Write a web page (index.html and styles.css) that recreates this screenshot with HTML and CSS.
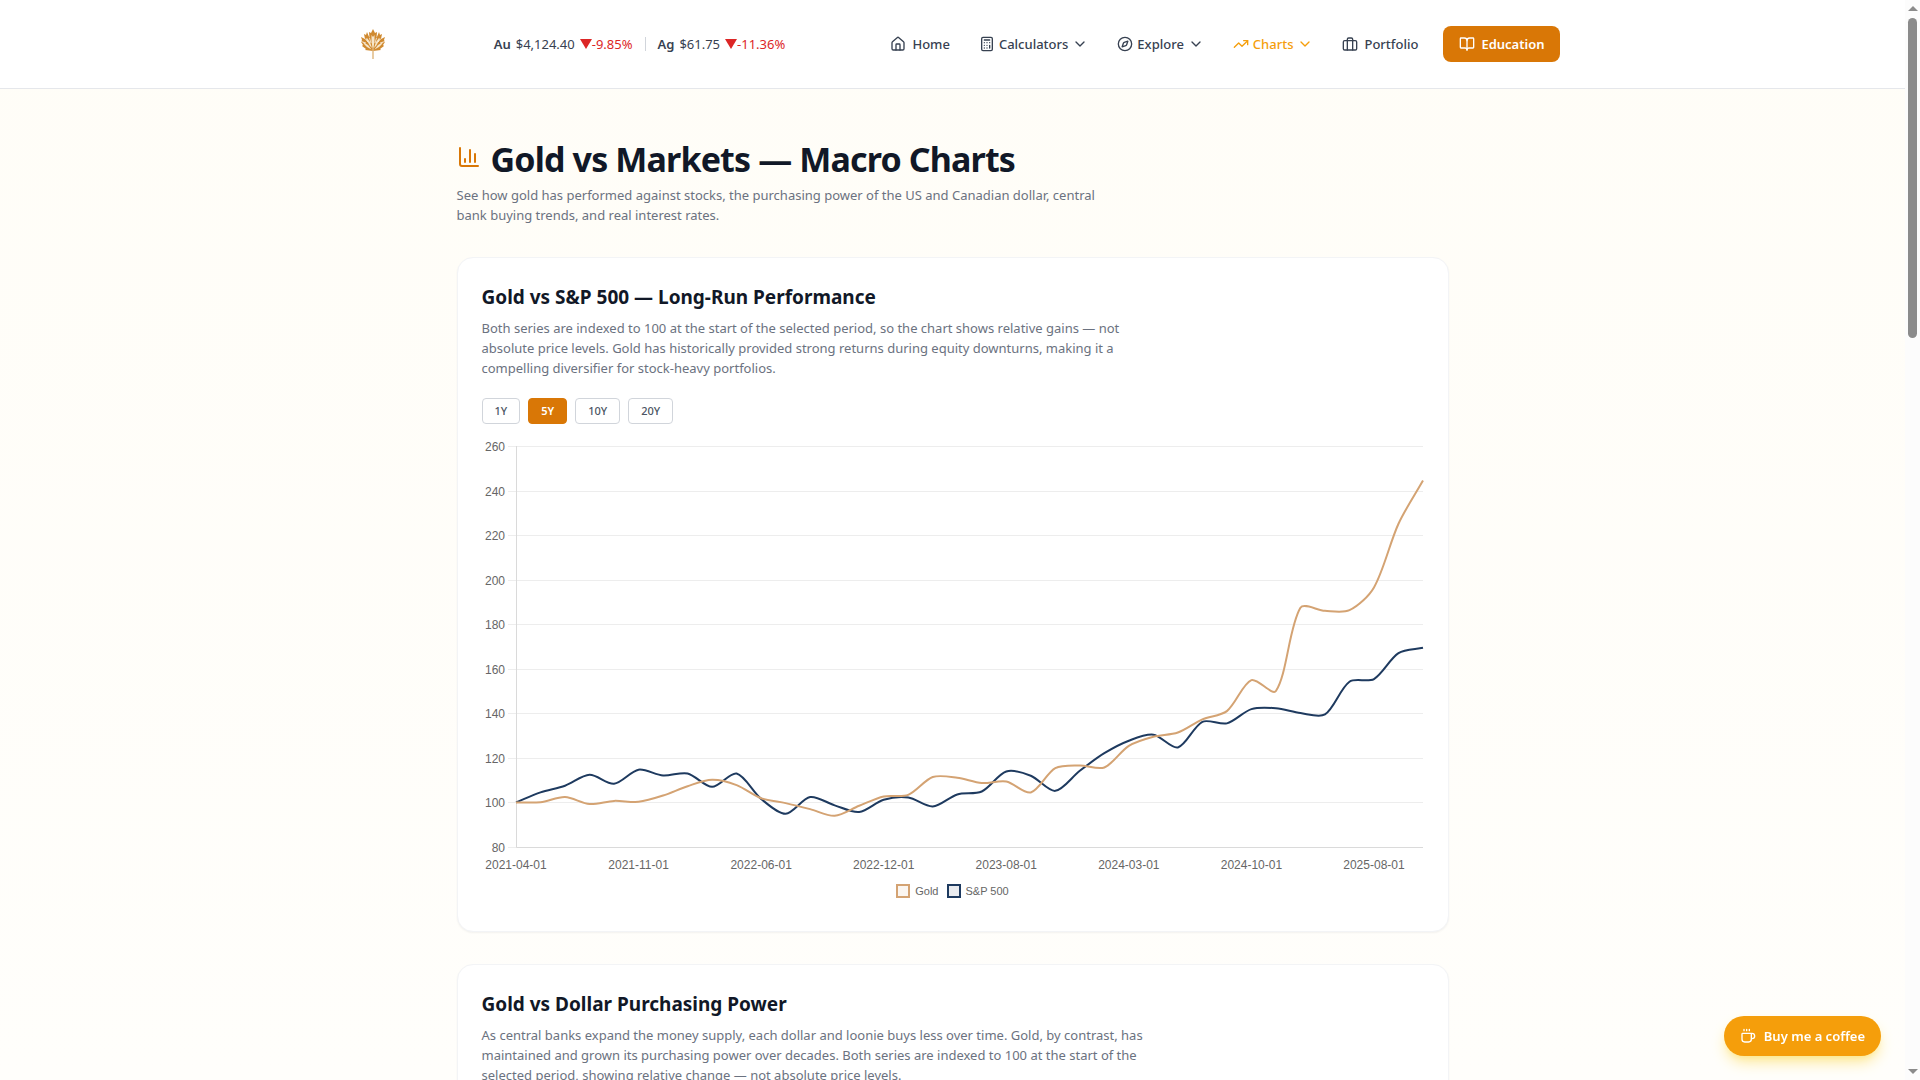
FILE: index.html
```html
<!DOCTYPE html>
<html lang="en">
<head>
    <meta charset="UTF-8">
    <meta name="viewport" content="width=device-width, initial-scale=1.0">
    <title>Gold vs Markets — Macro Charts</title>
    <link rel="stylesheet" href="styles.css">
</head>
<body>
    <header class="site-header">
        <div class="header-inner">
            <a href="#" class="logo" aria-label="Home page">
                <svg viewBox="0 0 24 30" width="24" height="30">
                    <g id="half-leaf">
                        <path fill="#d08a30" d="M12 0L14 4L16 3L15.500 9L18 3L19 6L21 5L20 10L24 8L23 11L24 13L22 16L23 17L19 20L20 21L12 22Z"/>
                        <path fill="#f6e6ca" d="M12 8L13.500 6L13.500 12L12.500 19L12 19ZM18 9L19 10L15 17L13 19L15 13ZM22 13L21 15L18 18L13.500 20.500L17 16Z"/>
                        <path fill="none" stroke="#fff" stroke-width=".7" d="M15.500 9L14 14M24 12.500L19 14M20 9.500L17 13"/>
                    </g>
                    <use href="#half-leaf" transform="matrix(-1 0 0 1 24 0)"/>
                    <path fill="none" stroke="#dfb67c" stroke-width="1.400" d="M12 18v12"/>
                </svg>
            </a>

            <div class="ticker">
                <div class="quote">
                    <strong>Au</strong>
                    <span>$4,124.40</span>
                    <span class="down"><i class="arrow"></i>-9.85%</span>
                </div>
                <span class="divider"></span>
                <div class="quote">
                    <strong>Ag</strong>
                    <span>$61.75</span>
                    <span class="down"><i class="arrow"></i>-11.36%</span>
                </div>
            </div>

            <nav class="nav">
                <a href="#" class="nav-link wide">
                    <svg class="icon" viewBox="0 0 24 24"><path d="M15 21v-8a1 1 0 0 0-1-1h-4a1 1 0 0 0-1 1v8"/><path d="M3 10a2 2 0 0 1 .709-1.528l7-5.999a2 2 0 0 1 2.582 0l7 5.999A2 2 0 0 1 21 10v9a2 2 0 0 1-2 2H5a2 2 0 0 1-2-2z"/></svg>
                    Home
                </a>
                <button type="button" class="nav-link">
                    <svg class="icon" viewBox="0 0 24 24"><rect width="16" height="20" x="4" y="2" rx="2"/><path d="M8 6h8M16 14v4M16 10h.01M12 10h.01M8 10h.01M12 14h.01M8 14h.01M12 18h.01M8 18h.01"/></svg>
                    Calculators
                    <svg class="icon" viewBox="0 0 24 24"><path d="m6 9 6 6 6-6"/></svg>
                </button>
                <button type="button" class="nav-link">
                    <svg class="icon" viewBox="0 0 24 24"><path d="m16.240 7.760-1.804 5.411a2 2 0 0 1-1.265 1.265L7.760 16.240l1.804-5.411a2 2 0 0 1 1.265-1.265z"/><circle cx="12" cy="12" r="10"/></svg>
                    Explore
                    <svg class="icon" viewBox="0 0 24 24"><path d="m6 9 6 6 6-6"/></svg>
                </button>
                <button type="button" class="nav-link active">
                    <svg class="icon" viewBox="0 0 24 24"><path d="M16 7h6v6"/><path d="m22 7-8.500 8.500-5-5L2 17"/></svg>
                    Charts
                    <svg class="icon" viewBox="0 0 24 24"><path d="m6 9 6 6 6-6"/></svg>
                </button>
                <a href="#" class="nav-link wide">
                    <svg class="icon" viewBox="0 0 24 24"><rect width="20" height="14" x="2" y="7" rx="2"/><path d="M16 21V5a2 2 0 0 0-2-2h-4a2 2 0 0 0-2 2v16"/></svg>
                    Portfolio
                </a>
                <a href="#" class="nav-link nav-cta">
                    <svg class="icon" viewBox="0 0 24 24"><path d="M12 7v14"/><path d="M3 18a1 1 0 0 1-1-1V4a1 1 0 0 1 1-1h5a4 4 0 0 1 4 4 4 4 0 0 1 4-4h5a1 1 0 0 1 1 1v13a1 1 0 0 1-1 1h-6a3 3 0 0 0-3 3 3 3 0 0 0-3-3z"/></svg>
                    Education
                </a>
            </nav>
        </div>
    </header>

    <main class="page">
        <div class="page-head">
            <h1>
                <svg class="icon" viewBox="0 0 24 24"><path d="M3 3v16a2 2 0 0 0 2 2h16"/><path d="M18 17V9M13 17V5M8 17v-3"/></svg>
                Gold vs Markets — Macro Charts
            </h1>
            <p>See how gold has performed against stocks, the purchasing power of the US and Canadian dollar, central bank buying trends, and real interest rates.</p>
        </div>

        <section class="card">
            <h2>Gold vs S&amp;P 500 — Long-Run Performance</h2>
            <p>Both series are indexed to 100 at the start of the selected period, so the chart shows relative gains — not absolute price levels. Gold has historically provided strong returns during equity downturns, making it a compelling diversifier for stock-heavy portfolios.</p>
            <div class="ranges">
                <button type="button">1Y</button>
                <button type="button" class="selected">5Y</button>
                <button type="button">10Y</button>
                <button type="button">20Y</button>
            </div>
            <svg class="chart" id="chart" role="img" aria-label="Gold and S&amp;P 500, indexed to 100"></svg>
            <div class="legend">
                <span class="key gold">Gold</span>
                <span class="key stocks">S&amp;P 500</span>
            </div>
        </section>

        <section class="card">
            <h2>Gold vs Dollar Purchasing Power</h2>
            <p>As central banks expand the money supply, each dollar and loonie buys less over time. Gold, by contrast, has maintained and grown its purchasing power over decades. Both series are indexed to 100 at the start of the selected period, showing relative change — not absolute price levels.</p>
        </section>
    </main>

    <a href="#" class="coffee">
        <svg class="icon" viewBox="0 0 24 24"><path d="M10 2v2M14 2v2M6 2v2"/><path d="M16 8a1 1 0 0 1 1 1v8a4 4 0 0 1-4 4H7a4 4 0 0 1-4-4V9a1 1 0 0 1 1-1h14a4 4 0 1 1 0 8h-1"/></svg>
        Buy me a coffee
    </a>

    <div class="scrollbar" aria-hidden="true">
        <i class="scroll-up"></i>
        <i class="scroll-thumb"></i>
        <i class="scroll-down"></i>
    </div>

    <script src="chart.js"></script>
</body>
</html>
```

FILE: styles.css
```css
*, *::before {
    box-sizing: border-box;
}

body {
    margin: 0;
    padding-right: 15px;
    height: 100vh;
    overflow: hidden;
    background: linear-gradient(#fffdf7, #fffefb);
    color: #111827;
    font-family: "Segoe UI", "Noto Sans", sans-serif;
    font-size: 13px;
    line-height: 20px;
}

h1, h2, p {
    margin: 0;
}

a {
    color: inherit;
    text-decoration: none;
}

button {
    font-family: inherit;
    cursor: pointer;
}

.icon {
    width: 16px;
    height: 16px;
    flex: none;
    fill: none;
    stroke: currentColor;
    stroke-width: 2;
    stroke-linecap: round;
    stroke-linejoin: round;
}

/* header */
.site-header {
    background: #fff;
    border-bottom: 1px solid #e5e7eb;
}

.header-inner {
    display: flex;
    align-items: center;
    justify-content: space-between;
    max-width: 1280px;
    margin: 0 auto;
    padding: 16px 32px;
}

.logo {
    display: flex;
    align-items: center;
    justify-content: center;
    width: 56px;
    height: 56px;
}

.ticker {
    display: flex;
    align-items: center;
    gap: 12px;
    margin-right: 12px;
    color: #374151;
}

.quote {
    display: flex;
    gap: 5px;
}

.quote strong {
    font-weight: 600;
}

.down {
    display: flex;
    align-items: center;
    color: #dc2626;
}

.arrow {
    border: 6px solid transparent;
    border-top: 10px solid #dc2626;
    border-bottom: 0;
}

.divider {
    width: 1px;
    height: 14px;
    background: #d1d5db;
}

.nav {
    display: flex;
    align-items: center;
    gap: 29px;
}

.nav-link {
    display: flex;
    align-items: center;
    gap: 4px;
    padding: 0;
    border: 0;
    background: none;
    color: #374151;
    font-size: 13px;
    font-weight: 500;
    line-height: 20px;
}

.nav-link.wide {
    gap: 6px;
}

.nav-link.active {
    color: #f59e0b;
}

.nav-link.nav-cta {
    gap: 6px;
    margin-left: -4px;
    padding: 8px 16px;
    border-radius: 8px;
    background: #d97706;
    color: #fff;
    font-weight: 600;
}

/* page */
.page {
    max-width: 1024px;
    margin: 0 auto;
    padding: 48px 16px;
}

.page-head {
    margin-bottom: 32px;
}

.page-head h1 {
    display: flex;
    align-items: center;
    gap: 10px;
    margin-bottom: 4px;
    font-size: 34px;
    line-height: 44px;
    letter-spacing: -0.025em;
}

.page-head h1 .icon {
    width: 24px;
    height: 24px;
    margin-bottom: 4px;
    color: #d97706;
}

.page-head p {
    max-width: 672px;
    color: #6b7280;
}

.card {
    margin-bottom: 32px;
    padding: 24px;
    border: 1px solid #f3f4f6;
    border-radius: 16px;
    background: #fff;
    box-shadow: 0 1px 2px rgba(0, 0, 0, 0.05);
}

.card h2 {
    margin-bottom: 6px;
    font-size: 19px;
    line-height: 30px;
}

.card p {
    max-width: 672px;
    margin-bottom: 20px;
    color: #6b7280;
}

.ranges {
    display: flex;
    gap: 8px;
    margin-bottom: 16px;
}

.ranges button {
    padding: 4px 12px;
    border: 1px solid #d1d5db;
    border-radius: 4px;
    background: #fff;
    color: #4b5563;
    font-size: 11px;
    font-weight: 500;
    line-height: 16px;
}

.ranges .selected {
    border-color: #d97706;
    background: #d97706;
    color: #fff;
    font-weight: 600;
}

/* chart */
.chart {
    display: block;
    width: 100%;
    height: 436px;
    font-family: "Liberation Sans", Arial, sans-serif;
    font-size: 12px;
    fill: #666;
}

.grid {
    stroke: #ededed;
}

.axis {
    stroke: #dadada;
}

.line {
    fill: none;
    stroke-width: 2;
}

.line.gold {
    stroke: #d4a373;
}

.line.stocks {
    stroke: #1e3a5f;
}

.legend {
    display: flex;
    justify-content: center;
    gap: 8px;
    padding: 8px 0 9px;
    color: #666;
    font-family: "Liberation Sans", Arial, sans-serif;
    font-size: 11px;
    line-height: 14px;
}

.key {
    display: flex;
    gap: 5px;
}

.key::before {
    content: "";
    width: 14px;
    height: 14px;
    border: 2px solid #d4a373;
    background: #fbf6f1;
}

.key.stocks::before {
    border-color: #1e3a5f;
    background: #e9ebef;
}

/* floating button */
.coffee {
    position: fixed;
    right: 39px;
    bottom: 24px;
    display: flex;
    align-items: center;
    gap: 8px;
    padding: 10px 16px;
    border-radius: 20px;
    background: #f59e0b;
    color: #fff;
    font-weight: 600;
    box-shadow: 0 8px 15px -3px #fde68a, 0 4px 6px -4px #fde68a;
}

/* scrollbar */
.scrollbar {
    position: fixed;
    top: 0;
    right: 0;
    bottom: 0;
    display: flex;
    flex-direction: column;
    align-items: center;
    width: 15px;
    padding: 6px 0;
    background: #fcfcfc;
}

.scroll-up, .scroll-down {
    border: 5px solid transparent;
}

.scroll-up {
    border-top: 0;
    border-bottom-color: #8b8b8b;
}

.scroll-down {
    margin-top: auto;
    border-bottom: 0;
    border-top-color: #8b8b8b;
}

.scroll-thumb {
    width: 9px;
    height: 30%;
    margin-top: 7px;
    border-radius: 5px;
    background: #8b8b8b;
}
```

FILE: chart.js
```js
const gold = [
    100, 100.1, 102.4, 99.3, 100.7, 100.3, 103.1, 107.3, 110.2, 107.8, 101.9, 99.7, 97,
    94, 98.5, 102.7, 103.4, 111.4, 111.1, 108.7, 109.4, 104.5, 115.4, 116.6, 115.7, 125.4,
    129.5, 131.4, 137.3, 141, 154.9, 150, 187.4, 186, 186.3, 196.5, 225.1, 244.5
];
const stocks = [
    100, 104.5, 107.5, 112.4, 108.4, 114.7, 112.1, 113, 107, 113, 101.6, 94.9, 102.4,
    98.7, 95.7, 101.2, 102.2, 98.2, 103.6, 104.9, 113.9, 112, 105.2, 114.2, 122.1, 127.7,
    130.4, 124.7, 136.2, 135.5, 141.9, 142.3, 140.1, 139.5, 154.2, 155.4, 167, 169.4
];
// one label for every fifth point
const labels = [
    "2021-04-01", "2021-11-01", "2022-06-01", "2022-12-01",
    "2023-08-01", "2024-03-01", "2024-10-01", "2025-08-01"
];
const tension = 0.3;
const svg = document.getElementById("chart");

function drawChart() {
    const left = 34, right = svg.clientWidth - 1, top = 6, bottom = 407;
    const x = i => left + i * (right - left) / (gold.length - 1);
    const y = v => bottom - (v - 80) * (bottom - top) / 180;
    let out = "";

    for (let v = 80; v <= 260; v += 20) {
        const gy = Math.round(y(v)) + 0.5;
        out += `<path class="grid" d="M${left - 8} ${gy}H${right}"/>`;
        out += `<text x="${left - 11}" y="${gy + 4}" text-anchor="end">${v}</text>`;
    }
    out += `<path class="axis" fill="none" d="M${left + 0.5} ${top}V${bottom + 0.5}H${right}"/>`;
    labels.forEach((label, i) => {
        out += `<text x="${x(i * 5)}" y="429" text-anchor="middle">${label}</text>`;
    });

    out += `<path class="line stocks" d="${curve(stocks, x, y)}"/>`;
    out += `<path class="line gold" d="${curve(gold, x, y)}"/>`;
    svg.innerHTML = out;
}

// smooth line through the points
function curve(data, x, y) {
    const pts = data.map((v, i) => ({ x: x(i), y: y(v) }));
    const handles = pts.map((p, i) => {
        const a = pts[i - 1] || p;
        const b = pts[i + 1] || p;
        const da = Math.hypot(p.x - a.x, p.y - a.y);
        const db = Math.hypot(b.x - p.x, b.y - p.y);
        const fa = tension * da / (da + db);
        const fb = tension * db / (da + db);
        return {
            inX: p.x - fa * (b.x - a.x), inY: p.y - fa * (b.y - a.y),
            outX: p.x + fb * (b.x - a.x), outY: p.y + fb * (b.y - a.y)
        };
    });
    let d = `M${pts[0].x} ${pts[0].y}`;
    for (let i = 1; i < pts.length; i++) {
        const h = handles[i - 1], k = handles[i];
        d += `C${h.outX} ${h.outY} ${k.inX} ${k.inY} ${pts[i].x} ${pts[i].y}`;
    }
    return d;
}

drawChart();
window.addEventListener("resize", drawChart);
```
